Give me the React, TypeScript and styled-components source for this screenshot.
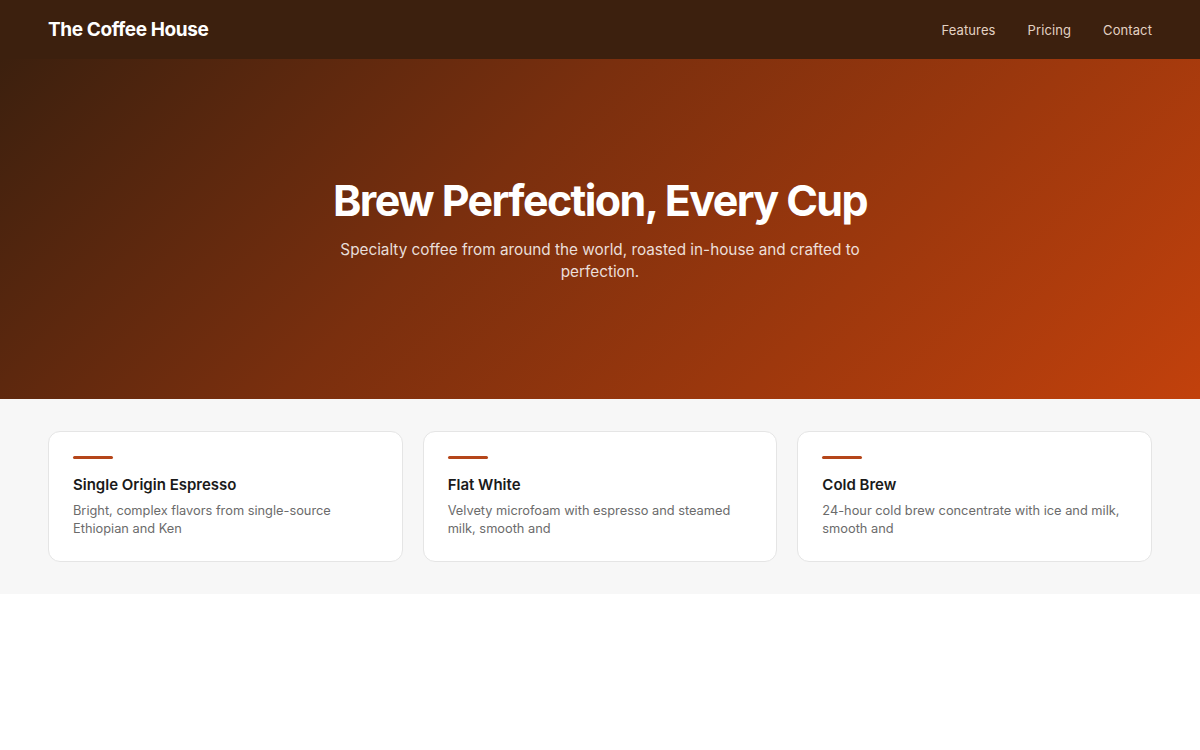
import React from "react";
import styled, { createGlobalStyle } from "styled-components";

const GlobalStyle = createGlobalStyle`
  * { box-sizing: border-box; }
  body {
    margin: 0;
    font-family: Inter, "Noto Sans", "Liberation Sans", sans-serif;
    background: #ffffff;
    -webkit-font-smoothing: antialiased;
  }
`;

const Header = styled.header`
  height: 59px;
  background: #3c200e;
  display: flex;
  align-items: center;
  justify-content: space-between;
  padding: 0 48px;
`;

const Logo = styled.div`
  color: #ffffff;
  font-size: 19px;
  font-weight: 700;
  letter-spacing: -0.4px;
`;

const Nav = styled.nav`
  display: flex;
  gap: 32px;
`;

const NavLink = styled.a`
  color: #e3d2c3;
  font-size: 13px;
  font-weight: 400;
  text-decoration: none;
  letter-spacing: 0.1px;
`;

const Hero = styled.section`
  height: 340px;
  background: linear-gradient(135deg, #3c200e 0%, #7a2f0e 40%, #c2410c 100%);
  display: flex;
  flex-direction: column;
  align-items: center;
  justify-content: center;
  text-align: center;
`;

const Title = styled.h1`
  margin: 0;
  color: #ffffff;
  font-size: 43px;
  font-weight: 700;
  letter-spacing: -1.6px;
  line-height: 1.2;
`;

const Subtitle = styled.p`
  margin: 13px 0 0;
  max-width: 545px;
  color: rgba(255, 255, 255, 0.85);
  font-size: 15.3px;
  line-height: 22px;
`;

const Features = styled.section`
  background: #f7f7f7;
  padding: 32px 48px;
`;

const Grid = styled.div`
  display: grid;
  grid-template-columns: repeat(3, 1fr);
  gap: 20px;
`;

const Card = styled.div`
  background: #ffffff;
  border: 1px solid #e5e5e5;
  border-radius: 12px;
  padding: 24px;
  height: 131px;
`;

const Accent = styled.div`
  width: 40px;
  height: 3px;
  border-radius: 2px;
  background: #b5461a;
`;

const CardTitle = styled.h3`
  margin: 16px 0 0;
  font-size: 15px;
  font-weight: 600;
  color: #1a1a1a;
  line-height: 20px;
`;

const CardText = styled.p`
  margin: 7px 0 0;
  font-size: 12.8px;
  line-height: 18px;
  color: #6b6b6b;
`;

const items = [
  { title: "Single Origin Espresso", text: "Bright, complex flavors from single-source Ethiopian and Ken" },
  { title: "Flat White", text: "Velvety microfoam with espresso and steamed milk, smooth and" },
  { title: "Cold Brew", text: "24-hour cold brew concentrate with ice and milk, smooth and" },
];

export default function App() {
  return (
    <>
      <GlobalStyle />
      <Header>
        <Logo>The Coffee House</Logo>
        <Nav>
          <NavLink href="#">Features</NavLink>
          <NavLink href="#">Pricing</NavLink>
          <NavLink href="#">Contact</NavLink>
        </Nav>
      </Header>
      <Hero>
        <Title>Brew Perfection, Every Cup</Title>
        <Subtitle>Specialty coffee from around the world, roasted in-house and crafted to perfection.</Subtitle>
      </Hero>
      <Features>
        <Grid>
          {items.map((it) => (
            <Card key={it.title}>
              <Accent />
              <CardTitle>{it.title}</CardTitle>
              <CardText>{it.text}</CardText>
            </Card>
          ))}
        </Grid>
      </Features>
    </>
  );
}
